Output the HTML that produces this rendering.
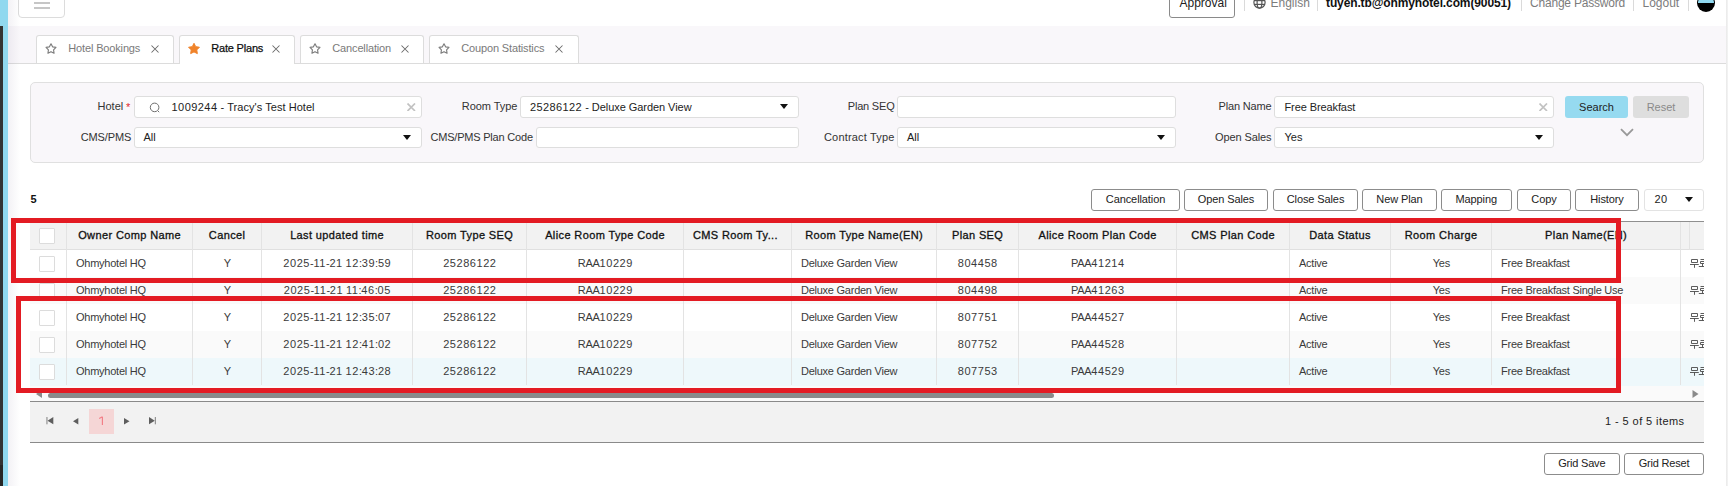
<!DOCTYPE html><html><head><meta charset="utf-8"><style>
*{box-sizing:border-box;margin:0;padding:0}
html,body{width:1728px;height:486px;overflow:hidden;background:#fff}
body{position:relative;font-family:"Liberation Sans",sans-serif;font-size:11px;color:#222}
.a{position:absolute}
.t{position:absolute;white-space:nowrap}
.sep{position:absolute;width:1px;background:#dadada}
.inp{position:absolute;background:#fff;border:1px solid #dedede;border-radius:3px}
.tri{position:absolute;width:0;height:0;border-left:4.5px solid transparent;border-right:4.5px solid transparent;border-top:5.5px solid #111}
.btn{position:absolute;border:1px solid #8c8c8c;border-radius:3px;background:#fff}
.tab{position:absolute;top:35px;height:28px;background:#fff;border:1px solid #dcdcdc;border-bottom:none;border-radius:3px 3px 0 0}
.vl{position:absolute;width:1px;background:#e3e3e3}
.cb{position:absolute;width:16px;height:16px;border:1px solid #dcdcdc;background:#fff;border-radius:1px}
.red{position:absolute;border:5px solid #e31b23}
</style></head><body>
<div class="a" style="left:0;top:0;width:8px;height:486px;background:#90d8ef"></div>
<div class="a" style="left:0;top:26px;width:3px;height:439px;background:#333"></div>
<div class="a" style="left:0;top:465px;width:3px;height:21px;background:#262626"></div>
<div class="a" style="left:1726px;top:0;width:2px;height:486px;background:linear-gradient(to right,#e9e9e9,#f4f4f4)"></div>
<div class="a" style="left:18px;top:-12px;width:47px;height:30px;border:1px solid #dcdcdc;border-radius:4px;background:#fff"></div>
<div class="a" style="left:34px;top:2px;width:16px;height:2px;background:#c6c6c6"></div>
<div class="a" style="left:34px;top:7px;width:16px;height:2px;background:#c6c6c6"></div>
<div class="btn" style="left:1169px;top:-9px;width:66px;height:27px;border-color:#8a8a8a"></div>
<div class="t" style="left:1179.5px;top:-3px;font-size:12px;line-height:12px;color:#222;">Approval</div>
<div class="sep" style="left:1244px;top:0;height:11px"></div>
<svg class="a" style="left:1253px;top:-4px" width="13" height="13" viewBox="0 0 13 13"><g fill="none" stroke="#555" stroke-width="1.2"><circle cx="6.5" cy="6.5" r="5.6"/><ellipse cx="6.5" cy="6.5" rx="2.4" ry="5.6"/><line x1="1" y1="4.6" x2="12" y2="4.6"/><line x1="1" y1="8.4" x2="12" y2="8.4"/></g></svg>
<div class="t" style="left:1270.5px;top:-3px;font-size:12px;line-height:12px;color:#7c7c7c;">English</div>
<div class="sep" style="left:1317px;top:0;height:11px"></div>
<div class="t" style="left:1326px;top:-3px;font-size:12px;line-height:12px;font-weight:bold;color:#111;letter-spacing:-0.12px;">tuyen.tb@ohmyhotel.com(90051)</div>
<div class="sep" style="left:1521px;top:0;height:11px"></div>
<div class="t" style="left:1530px;top:-3px;font-size:12px;line-height:12px;color:#7c7c7c;letter-spacing:-0.2px;">Change Password</div>
<div class="sep" style="left:1633px;top:0;height:11px"></div>
<div class="t" style="left:1642.5px;top:-3px;font-size:12px;line-height:12px;color:#7c7c7c;">Logout</div>
<div class="sep" style="left:1688px;top:0;height:11px"></div>
<div class="a" style="left:1697px;top:-6.4px;width:18px;height:18px;border-radius:50%;background:#000"></div>
<div class="a" style="left:1698px;top:-5.4px;width:16px;height:16px;border-radius:50%;background:linear-gradient(to bottom,#90d8ef 0,#90d8ef 8.3px,#000 8.3px)"></div>
<div class="a" style="left:8px;top:26px;width:1718px;height:38px;background:#f9f7fa;border-bottom:1px solid #dcdcdc"></div>
<div class="tab" style="left:36px;width:138px;height:28px"></div>
<svg class="a" style="left:42.5px;top:41.1px" width="16" height="16" viewBox="0 0 16 16"><path d="M8.00 2.80L9.59 5.82L12.95 6.39L10.57 8.83L11.06 12.21L8.00 10.70L4.94 12.21L5.43 8.83L3.05 6.39L6.41 5.82Z" fill="none" stroke="#7d7d7d" stroke-width="1.15" stroke-linejoin="round"/></svg>
<div class="t" style="left:68.3px;top:43px;font-size:11px;line-height:11px;color:#7a7a7a;letter-spacing:-0.15px;">Hotel Bookings</div>
<div class="tab" style="left:179px;width:116px;height:29px"></div>
<svg class="a" style="left:185.5px;top:41.3px" width="16" height="16" viewBox="0 0 16 16"><path d="M8.00 2.30L9.70 5.65L13.42 6.24L10.76 8.90L11.35 12.61L8.00 10.90L4.65 12.61L5.24 8.90L2.58 6.24L6.30 5.65Z" fill="#f0832a" stroke="#f0832a" stroke-width="1" stroke-linejoin="round"/></svg>
<div class="t" style="left:211.3px;top:43px;font-size:11px;line-height:11px;color:#111;-webkit-text-stroke:0.25px #111;letter-spacing:-0.2px;">Rate Plans</div>
<div class="tab" style="left:300px;width:124px;height:28px"></div>
<svg class="a" style="left:306.5px;top:41.1px" width="16" height="16" viewBox="0 0 16 16"><path d="M8.00 2.80L9.59 5.82L12.95 6.39L10.57 8.83L11.06 12.21L8.00 10.70L4.94 12.21L5.43 8.83L3.05 6.39L6.41 5.82Z" fill="none" stroke="#7d7d7d" stroke-width="1.15" stroke-linejoin="round"/></svg>
<div class="t" style="left:332.3px;top:43px;font-size:11px;line-height:11px;color:#7a7a7a;letter-spacing:-0.15px;">Cancellation</div>
<div class="tab" style="left:429px;width:150px;height:28px"></div>
<svg class="a" style="left:435.5px;top:41.1px" width="16" height="16" viewBox="0 0 16 16"><path d="M8.00 2.80L9.59 5.82L12.95 6.39L10.57 8.83L11.06 12.21L8.00 10.70L4.94 12.21L5.43 8.83L3.05 6.39L6.41 5.82Z" fill="none" stroke="#7d7d7d" stroke-width="1.15" stroke-linejoin="round"/></svg>
<div class="t" style="left:461.3px;top:43px;font-size:11px;line-height:11px;color:#7a7a7a;letter-spacing:-0.15px;">Coupon Statistics</div>
<svg class="a" style="left:150.6px;top:45.2px" width="8" height="8" viewBox="0 0 8 8"><path d="M0.5 0.5L7.5 7.5M7.5 0.5L0.5 7.5" stroke="#6a6a6a" stroke-width="1.05"/></svg>
<svg class="a" style="left:271.5px;top:45.2px" width="8" height="8" viewBox="0 0 8 8"><path d="M0.5 0.5L7.5 7.5M7.5 0.5L0.5 7.5" stroke="#6a6a6a" stroke-width="1.05"/></svg>
<svg class="a" style="left:400.6px;top:45.2px" width="8" height="8" viewBox="0 0 8 8"><path d="M0.5 0.5L7.5 7.5M7.5 0.5L0.5 7.5" stroke="#6a6a6a" stroke-width="1.05"/></svg>
<svg class="a" style="left:555px;top:45.2px" width="8" height="8" viewBox="0 0 8 8"><path d="M0.5 0.5L7.5 7.5M7.5 0.5L0.5 7.5" stroke="#6a6a6a" stroke-width="1.05"/></svg>
<div class="a" style="left:30px;top:82px;width:1674px;height:81px;background:#f9f7fa;border:1px solid #e0e0e0;border-radius:5px"></div>
<div class="t" style="right:1604.8px;top:101px;font-size:11px;line-height:11px;color:#333;">Hotel</div>
<div class="t" style="left:126px;top:102px;font-size:11px;line-height:11px;color:#e0282e;">*</div>
<div class="inp" style="left:134px;top:96px;width:288px;height:22px"></div>
<svg class="a" style="left:148.5px;top:101.5px" width="12" height="12" viewBox="0 0 12 12"><circle cx="5.6" cy="5.4" r="4.3" fill="none" stroke="#6e6e6e" stroke-width="1"/><line x1="9" y1="9" x2="10.2" y2="10.2" stroke="#6e6e6e" stroke-width="1"/></svg>
<div class="t" style="left:171.5px;top:102px;font-size:11px;line-height:11px;color:#222;letter-spacing:0.05px;"><span style="letter-spacing:0.45px">1009244</span> - Tracy's Test Hotel</div>
<svg class="a" style="left:407.3px;top:102.8px" width="8.5" height="8.5" viewBox="0 0 8.5 8.5"><path d="M0.5 0.5L8.0 8.0M8.0 0.5L0.5 8.0" stroke="#c2c2c2" stroke-width="1.7"/></svg>
<div class="t" style="right:1210.6px;top:101px;font-size:11px;line-height:11px;color:#333;letter-spacing:-0.05px;">Room Type</div>
<div class="inp" style="left:520px;top:96px;width:279px;height:22px"></div>
<div class="t" style="left:530px;top:102px;font-size:11px;line-height:11px;color:#222;letter-spacing:-0.05px;"><span style="letter-spacing:0.4px">25286122</span> - Deluxe Garden View</div>
<div class="tri" style="left:780px;top:104px;border-top-color:#111"></div>
<div class="t" style="right:833.5px;top:101px;font-size:11px;line-height:11px;color:#333;letter-spacing:-0.2px;">Plan SEQ</div>
<div class="inp" style="left:897px;top:96px;width:279px;height:22px"></div>
<div class="t" style="right:456.5px;top:101px;font-size:11px;line-height:11px;color:#333;letter-spacing:-0.17px;">Plan Name</div>
<div class="inp" style="left:1274px;top:96px;width:280px;height:22px"></div>
<div class="t" style="left:1284.5px;top:102px;font-size:11px;line-height:11px;color:#222;letter-spacing:-0.1px;">Free Breakfast</div>
<svg class="a" style="left:1539.3px;top:102.8px" width="8.5" height="8.5" viewBox="0 0 8.5 8.5"><path d="M0.5 0.5L8.0 8.0M8.0 0.5L0.5 8.0" stroke="#c2c2c2" stroke-width="1.7"/></svg>
<div class="a" style="left:1565px;top:96px;width:63px;height:22px;background:#96daf0;border-radius:3px"></div>
<div class="t" style="left:1396.5px;width:400px;text-align:center;top:102px;font-size:11px;line-height:11px;color:#222;">Search</div>
<div class="a" style="left:1633px;top:96px;width:56px;height:22px;background:#dedede;border-radius:3px"></div>
<div class="t" style="left:1461px;width:400px;text-align:center;top:102px;font-size:11px;line-height:11px;color:#8a8a8a;">Reset</div>
<div class="t" style="right:1596.7px;top:132px;font-size:11px;line-height:11px;color:#333;letter-spacing:-0.1px;">CMS/PMS</div>
<div class="inp" style="left:134px;top:127px;width:288px;height:21px"></div>
<div class="t" style="left:143.5px;top:132px;font-size:11px;line-height:11px;color:#222;">All</div>
<div class="tri" style="left:403px;top:135px;border-top-color:#111"></div>
<div class="t" style="right:1195.2px;top:132px;font-size:11px;line-height:11px;color:#333;letter-spacing:-0.2px;">CMS/PMS Plan Code</div>
<div class="inp" style="left:536px;top:127px;width:263px;height:21px"></div>
<div class="t" style="right:833.5px;top:132px;font-size:11px;line-height:11px;color:#333;letter-spacing:0.17px;">Contract Type</div>
<div class="inp" style="left:897px;top:127px;width:279px;height:21px"></div>
<div class="t" style="left:907px;top:132px;font-size:11px;line-height:11px;color:#222;">All</div>
<div class="tri" style="left:1157px;top:135px;border-top-color:#111"></div>
<div class="t" style="right:456.5px;top:132px;font-size:11px;line-height:11px;color:#333;letter-spacing:-0.1px;">Open Sales</div>
<div class="inp" style="left:1274px;top:127px;width:280px;height:21px"></div>
<div class="t" style="left:1284.5px;top:132px;font-size:11px;line-height:11px;color:#222;">Yes</div>
<div class="tri" style="left:1535px;top:135px;border-top-color:#111"></div>
<svg class="a" style="left:1620px;top:127.5px" width="14" height="9" viewBox="0 0 14 9"><path d="M1 1.2L7 7.2L13 1.2" fill="none" stroke="#999" stroke-width="1.8"/></svg>
<div class="t" style="left:30.5px;top:194px;font-size:11px;line-height:11px;font-weight:bold;color:#111;">5</div>
<div class="btn" style="left:1091px;top:189px;width:89px;height:22px"></div>
<div class="t" style="left:935.5px;width:400px;text-align:center;top:194px;font-size:11px;line-height:11px;color:#222;letter-spacing:-0.1px;">Cancellation</div>
<div class="btn" style="left:1184px;top:189px;width:84px;height:22px"></div>
<div class="t" style="left:1026.0px;width:400px;text-align:center;top:194px;font-size:11px;line-height:11px;color:#222;letter-spacing:-0.1px;">Open Sales</div>
<div class="btn" style="left:1273px;top:189px;width:85px;height:22px"></div>
<div class="t" style="left:1115.5px;width:400px;text-align:center;top:194px;font-size:11px;line-height:11px;color:#222;letter-spacing:-0.1px;">Close Sales</div>
<div class="btn" style="left:1362px;top:189px;width:75px;height:22px"></div>
<div class="t" style="left:1199.5px;width:400px;text-align:center;top:194px;font-size:11px;line-height:11px;color:#222;letter-spacing:-0.1px;">New Plan</div>
<div class="btn" style="left:1441px;top:189px;width:70.5px;height:22px"></div>
<div class="t" style="left:1276.25px;width:400px;text-align:center;top:194px;font-size:11px;line-height:11px;color:#222;letter-spacing:-0.1px;">Mapping</div>
<div class="btn" style="left:1517px;top:189px;width:54px;height:22px"></div>
<div class="t" style="left:1344.0px;width:400px;text-align:center;top:194px;font-size:11px;line-height:11px;color:#222;letter-spacing:-0.1px;">Copy</div>
<div class="btn" style="left:1575px;top:189px;width:64px;height:22px"></div>
<div class="t" style="left:1407.0px;width:400px;text-align:center;top:194px;font-size:11px;line-height:11px;color:#222;letter-spacing:-0.1px;">History</div>
<div class="inp" style="left:1644px;top:189px;width:60px;height:22px;border-color:#e3e3e3"></div>
<div class="t" style="left:1654.5px;top:194px;font-size:11px;line-height:11px;color:#222;"><span style="letter-spacing:0.5px">20</span></div>
<div class="tri" style="left:1685px;top:196.5px;border-top-color:#111"></div>
<div class="a" style="left:30px;top:221px;width:1673.5px;height:1px;background:#8f8f8f"></div>
<div class="a" style="left:30px;top:222px;width:1673.5px;height:28px;background:#f2f2f2;border-bottom:1px solid #e0e0e0"></div>
<div class="a" style="left:30px;top:250px;width:1673.5px;height:27px;background:#ffffff"></div>
<div class="a" style="left:30px;top:277px;width:1673.5px;height:27px;background:#fafafa"></div>
<div class="a" style="left:30px;top:304px;width:1673.5px;height:27px;background:#ffffff"></div>
<div class="a" style="left:30px;top:331px;width:1673.5px;height:27px;background:#fafafa"></div>
<div class="a" style="left:30px;top:358px;width:1673.5px;height:28px;background:#eef8fb"></div>
<div class="vl" style="left:66px;top:222px;height:163px"></div>
<div class="vl" style="left:192px;top:222px;height:163px"></div>
<div class="vl" style="left:261px;top:222px;height:163px"></div>
<div class="vl" style="left:412px;top:222px;height:163px"></div>
<div class="vl" style="left:526px;top:222px;height:163px"></div>
<div class="vl" style="left:683px;top:222px;height:163px"></div>
<div class="vl" style="left:791px;top:222px;height:163px"></div>
<div class="vl" style="left:936px;top:222px;height:163px"></div>
<div class="vl" style="left:1018px;top:222px;height:163px"></div>
<div class="vl" style="left:1176px;top:222px;height:163px"></div>
<div class="vl" style="left:1289px;top:222px;height:163px"></div>
<div class="vl" style="left:1390px;top:222px;height:163px"></div>
<div class="vl" style="left:1491px;top:222px;height:163px"></div>
<div class="vl" style="left:1680px;top:222px;height:163px"></div>
<div class="vl" style="left:1689px;top:222px;height:28px"></div>
<div class="t" style="left:-70.4px;width:400px;text-align:center;top:230px;font-size:11px;line-height:11px;color:#111;-webkit-text-stroke:0.3px #111;letter-spacing:0.38px;">Owner Comp Name</div>
<div class="t" style="left:27.099999999999994px;width:400px;text-align:center;top:230px;font-size:11px;line-height:11px;color:#111;-webkit-text-stroke:0.3px #111;letter-spacing:0.38px;">Cancel</div>
<div class="t" style="left:137.10000000000002px;width:400px;text-align:center;top:230px;font-size:11px;line-height:11px;color:#111;-webkit-text-stroke:0.3px #111;letter-spacing:0.38px;">Last updated time</div>
<div class="t" style="left:269.6px;width:400px;text-align:center;top:230px;font-size:11px;line-height:11px;color:#111;-webkit-text-stroke:0.3px #111;letter-spacing:0.38px;">Room Type SEQ</div>
<div class="t" style="left:405.1px;width:400px;text-align:center;top:230px;font-size:11px;line-height:11px;color:#111;-webkit-text-stroke:0.3px #111;letter-spacing:0.38px;">Alice Room Type Code</div>
<div class="t" style="left:693px;top:230px;font-size:11px;line-height:11px;color:#111;-webkit-text-stroke:0.3px #111;letter-spacing:0.38px;">CMS Room Ty...</div>
<div class="t" style="left:664.1px;width:400px;text-align:center;top:230px;font-size:11px;line-height:11px;color:#111;-webkit-text-stroke:0.3px #111;letter-spacing:0.38px;">Room Type Name(EN)</div>
<div class="t" style="left:777.6px;width:400px;text-align:center;top:230px;font-size:11px;line-height:11px;color:#111;-webkit-text-stroke:0.3px #111;letter-spacing:0.38px;">Plan SEQ</div>
<div class="t" style="left:897.5999999999999px;width:400px;text-align:center;top:230px;font-size:11px;line-height:11px;color:#111;-webkit-text-stroke:0.3px #111;letter-spacing:0.38px;">Alice Room Plan Code</div>
<div class="t" style="left:1033.1px;width:400px;text-align:center;top:230px;font-size:11px;line-height:11px;color:#111;-webkit-text-stroke:0.3px #111;letter-spacing:0.38px;">CMS Plan Code</div>
<div class="t" style="left:1140.1px;width:400px;text-align:center;top:230px;font-size:11px;line-height:11px;color:#111;-webkit-text-stroke:0.3px #111;letter-spacing:0.38px;">Data Status</div>
<div class="t" style="left:1241.1px;width:400px;text-align:center;top:230px;font-size:11px;line-height:11px;color:#111;-webkit-text-stroke:0.3px #111;letter-spacing:0.38px;">Room Charge</div>
<div class="t" style="left:1386.1px;width:400px;text-align:center;top:230px;font-size:11px;line-height:11px;color:#111;-webkit-text-stroke:0.3px #111;letter-spacing:0.38px;">Plan Name(EN)</div>
<div class="cb" style="left:39px;top:228px"></div>
<div class="cb" style="left:39px;top:256px"></div>
<div class="t" style="left:76px;top:258px;font-size:11px;line-height:11px;color:#3a3a3a;letter-spacing:-0.25px;">Ohmyhotel HQ</div>
<div class="t" style="left:27.30000000000001px;width:400px;text-align:center;top:258px;font-size:11px;line-height:11px;color:#3a3a3a;letter-spacing:-0.25px;">Y</div>
<div class="t" style="left:137.3px;width:400px;text-align:center;top:258px;font-size:11px;line-height:11px;color:#3a3a3a;letter-spacing:-0.25px;"><span style="letter-spacing:0.55px">2025</span>-<span style="letter-spacing:0.55px">11</span>-<span style="letter-spacing:0.55px">21</span> <span style="letter-spacing:0.55px">12</span>:<span style="letter-spacing:0.55px">39</span>:<span style="letter-spacing:0.55px">59</span></div>
<div class="t" style="left:269.8px;width:400px;text-align:center;top:258px;font-size:11px;line-height:11px;color:#3a3a3a;letter-spacing:-0.25px;"><span style="letter-spacing:0.55px">25286122</span></div>
<div class="t" style="left:405.29999999999995px;width:400px;text-align:center;top:258px;font-size:11px;line-height:11px;color:#3a3a3a;letter-spacing:-0.25px;">RAA<span style="letter-spacing:0.55px">10229</span></div>
<div class="t" style="left:801px;top:258px;font-size:11px;line-height:11px;color:#3a3a3a;letter-spacing:-0.25px;">Deluxe Garden View</div>
<div class="t" style="left:777.8px;width:400px;text-align:center;top:258px;font-size:11px;line-height:11px;color:#3a3a3a;letter-spacing:-0.25px;"><span style="letter-spacing:0.55px">804458</span></div>
<div class="t" style="left:897.8px;width:400px;text-align:center;top:258px;font-size:11px;line-height:11px;color:#3a3a3a;letter-spacing:-0.25px;">PAA<span style="letter-spacing:0.55px">41214</span></div>
<div class="t" style="left:1299px;top:258px;font-size:11px;line-height:11px;color:#3a3a3a;letter-spacing:-0.25px;">Active</div>
<div class="t" style="left:1241.3px;width:400px;text-align:center;top:258px;font-size:11px;line-height:11px;color:#3a3a3a;letter-spacing:-0.25px;">Yes</div>
<div class="t" style="left:1501px;top:258px;font-size:11px;line-height:11px;color:#3a3a3a;letter-spacing:-0.25px;">Free Breakfast</div>
<div class="a" style="left:1689px;top:258px;width:15px;height:11px;overflow:hidden"><svg width="20" height="11" viewBox="0 0 20 11"><g fill="none" stroke="#4a4a4a" stroke-width="0.9"><path d="M2.5 1.5H8.5V4.5H2.5Z"/><path d="M1 6.5H9.8M5.5 6.5V9.8"/><path d="M11.5 1.5H16M11.5 3.5H16M11.5 3.5V5.5H16M13.5 5.5V8.5M9.8 8.5H16"/></g></svg></div>
<div class="cb" style="left:39px;top:283px"></div>
<div class="t" style="left:76px;top:285px;font-size:11px;line-height:11px;color:#3a3a3a;letter-spacing:-0.25px;">Ohmyhotel HQ</div>
<div class="t" style="left:27.30000000000001px;width:400px;text-align:center;top:285px;font-size:11px;line-height:11px;color:#3a3a3a;letter-spacing:-0.25px;">Y</div>
<div class="t" style="left:137.3px;width:400px;text-align:center;top:285px;font-size:11px;line-height:11px;color:#3a3a3a;letter-spacing:-0.25px;"><span style="letter-spacing:0.55px">2025</span>-<span style="letter-spacing:0.55px">11</span>-<span style="letter-spacing:0.55px">21</span> <span style="letter-spacing:0.55px">11</span>:<span style="letter-spacing:0.55px">46</span>:<span style="letter-spacing:0.55px">05</span></div>
<div class="t" style="left:269.8px;width:400px;text-align:center;top:285px;font-size:11px;line-height:11px;color:#3a3a3a;letter-spacing:-0.25px;"><span style="letter-spacing:0.55px">25286122</span></div>
<div class="t" style="left:405.29999999999995px;width:400px;text-align:center;top:285px;font-size:11px;line-height:11px;color:#3a3a3a;letter-spacing:-0.25px;">RAA<span style="letter-spacing:0.55px">10229</span></div>
<div class="t" style="left:801px;top:285px;font-size:11px;line-height:11px;color:#3a3a3a;letter-spacing:-0.25px;">Deluxe Garden View</div>
<div class="t" style="left:777.8px;width:400px;text-align:center;top:285px;font-size:11px;line-height:11px;color:#3a3a3a;letter-spacing:-0.25px;"><span style="letter-spacing:0.55px">804498</span></div>
<div class="t" style="left:897.8px;width:400px;text-align:center;top:285px;font-size:11px;line-height:11px;color:#3a3a3a;letter-spacing:-0.25px;">PAA<span style="letter-spacing:0.55px">41263</span></div>
<div class="t" style="left:1299px;top:285px;font-size:11px;line-height:11px;color:#3a3a3a;letter-spacing:-0.25px;">Active</div>
<div class="t" style="left:1241.3px;width:400px;text-align:center;top:285px;font-size:11px;line-height:11px;color:#3a3a3a;letter-spacing:-0.25px;">Yes</div>
<div class="t" style="left:1501px;top:285px;font-size:11px;line-height:11px;color:#3a3a3a;letter-spacing:-0.25px;">Free Breakfast Single Use</div>
<div class="a" style="left:1689px;top:285px;width:15px;height:11px;overflow:hidden"><svg width="20" height="11" viewBox="0 0 20 11"><g fill="none" stroke="#4a4a4a" stroke-width="0.9"><path d="M2.5 1.5H8.5V4.5H2.5Z"/><path d="M1 6.5H9.8M5.5 6.5V9.8"/><path d="M11.5 1.5H16M11.5 3.5H16M11.5 3.5V5.5H16M13.5 5.5V8.5M9.8 8.5H16"/></g></svg></div>
<div class="cb" style="left:39px;top:310px"></div>
<div class="t" style="left:76px;top:312px;font-size:11px;line-height:11px;color:#3a3a3a;letter-spacing:-0.25px;">Ohmyhotel HQ</div>
<div class="t" style="left:27.30000000000001px;width:400px;text-align:center;top:312px;font-size:11px;line-height:11px;color:#3a3a3a;letter-spacing:-0.25px;">Y</div>
<div class="t" style="left:137.3px;width:400px;text-align:center;top:312px;font-size:11px;line-height:11px;color:#3a3a3a;letter-spacing:-0.25px;"><span style="letter-spacing:0.55px">2025</span>-<span style="letter-spacing:0.55px">11</span>-<span style="letter-spacing:0.55px">21</span> <span style="letter-spacing:0.55px">12</span>:<span style="letter-spacing:0.55px">35</span>:<span style="letter-spacing:0.55px">07</span></div>
<div class="t" style="left:269.8px;width:400px;text-align:center;top:312px;font-size:11px;line-height:11px;color:#3a3a3a;letter-spacing:-0.25px;"><span style="letter-spacing:0.55px">25286122</span></div>
<div class="t" style="left:405.29999999999995px;width:400px;text-align:center;top:312px;font-size:11px;line-height:11px;color:#3a3a3a;letter-spacing:-0.25px;">RAA<span style="letter-spacing:0.55px">10229</span></div>
<div class="t" style="left:801px;top:312px;font-size:11px;line-height:11px;color:#3a3a3a;letter-spacing:-0.25px;">Deluxe Garden View</div>
<div class="t" style="left:777.8px;width:400px;text-align:center;top:312px;font-size:11px;line-height:11px;color:#3a3a3a;letter-spacing:-0.25px;"><span style="letter-spacing:0.55px">807751</span></div>
<div class="t" style="left:897.8px;width:400px;text-align:center;top:312px;font-size:11px;line-height:11px;color:#3a3a3a;letter-spacing:-0.25px;">PAA<span style="letter-spacing:0.55px">44527</span></div>
<div class="t" style="left:1299px;top:312px;font-size:11px;line-height:11px;color:#3a3a3a;letter-spacing:-0.25px;">Active</div>
<div class="t" style="left:1241.3px;width:400px;text-align:center;top:312px;font-size:11px;line-height:11px;color:#3a3a3a;letter-spacing:-0.25px;">Yes</div>
<div class="t" style="left:1501px;top:312px;font-size:11px;line-height:11px;color:#3a3a3a;letter-spacing:-0.25px;">Free Breakfast</div>
<div class="a" style="left:1689px;top:312px;width:15px;height:11px;overflow:hidden"><svg width="20" height="11" viewBox="0 0 20 11"><g fill="none" stroke="#4a4a4a" stroke-width="0.9"><path d="M2.5 1.5H8.5V4.5H2.5Z"/><path d="M1 6.5H9.8M5.5 6.5V9.8"/><path d="M11.5 1.5H16M11.5 3.5H16M11.5 3.5V5.5H16M13.5 5.5V8.5M9.8 8.5H16"/></g></svg></div>
<div class="cb" style="left:39px;top:337px"></div>
<div class="t" style="left:76px;top:339px;font-size:11px;line-height:11px;color:#3a3a3a;letter-spacing:-0.25px;">Ohmyhotel HQ</div>
<div class="t" style="left:27.30000000000001px;width:400px;text-align:center;top:339px;font-size:11px;line-height:11px;color:#3a3a3a;letter-spacing:-0.25px;">Y</div>
<div class="t" style="left:137.3px;width:400px;text-align:center;top:339px;font-size:11px;line-height:11px;color:#3a3a3a;letter-spacing:-0.25px;"><span style="letter-spacing:0.55px">2025</span>-<span style="letter-spacing:0.55px">11</span>-<span style="letter-spacing:0.55px">21</span> <span style="letter-spacing:0.55px">12</span>:<span style="letter-spacing:0.55px">41</span>:<span style="letter-spacing:0.55px">02</span></div>
<div class="t" style="left:269.8px;width:400px;text-align:center;top:339px;font-size:11px;line-height:11px;color:#3a3a3a;letter-spacing:-0.25px;"><span style="letter-spacing:0.55px">25286122</span></div>
<div class="t" style="left:405.29999999999995px;width:400px;text-align:center;top:339px;font-size:11px;line-height:11px;color:#3a3a3a;letter-spacing:-0.25px;">RAA<span style="letter-spacing:0.55px">10229</span></div>
<div class="t" style="left:801px;top:339px;font-size:11px;line-height:11px;color:#3a3a3a;letter-spacing:-0.25px;">Deluxe Garden View</div>
<div class="t" style="left:777.8px;width:400px;text-align:center;top:339px;font-size:11px;line-height:11px;color:#3a3a3a;letter-spacing:-0.25px;"><span style="letter-spacing:0.55px">807752</span></div>
<div class="t" style="left:897.8px;width:400px;text-align:center;top:339px;font-size:11px;line-height:11px;color:#3a3a3a;letter-spacing:-0.25px;">PAA<span style="letter-spacing:0.55px">44528</span></div>
<div class="t" style="left:1299px;top:339px;font-size:11px;line-height:11px;color:#3a3a3a;letter-spacing:-0.25px;">Active</div>
<div class="t" style="left:1241.3px;width:400px;text-align:center;top:339px;font-size:11px;line-height:11px;color:#3a3a3a;letter-spacing:-0.25px;">Yes</div>
<div class="t" style="left:1501px;top:339px;font-size:11px;line-height:11px;color:#3a3a3a;letter-spacing:-0.25px;">Free Breakfast</div>
<div class="a" style="left:1689px;top:339px;width:15px;height:11px;overflow:hidden"><svg width="20" height="11" viewBox="0 0 20 11"><g fill="none" stroke="#4a4a4a" stroke-width="0.9"><path d="M2.5 1.5H8.5V4.5H2.5Z"/><path d="M1 6.5H9.8M5.5 6.5V9.8"/><path d="M11.5 1.5H16M11.5 3.5H16M11.5 3.5V5.5H16M13.5 5.5V8.5M9.8 8.5H16"/></g></svg></div>
<div class="cb" style="left:39px;top:364px"></div>
<div class="t" style="left:76px;top:366px;font-size:11px;line-height:11px;color:#3a3a3a;letter-spacing:-0.25px;">Ohmyhotel HQ</div>
<div class="t" style="left:27.30000000000001px;width:400px;text-align:center;top:366px;font-size:11px;line-height:11px;color:#3a3a3a;letter-spacing:-0.25px;">Y</div>
<div class="t" style="left:137.3px;width:400px;text-align:center;top:366px;font-size:11px;line-height:11px;color:#3a3a3a;letter-spacing:-0.25px;"><span style="letter-spacing:0.55px">2025</span>-<span style="letter-spacing:0.55px">11</span>-<span style="letter-spacing:0.55px">21</span> <span style="letter-spacing:0.55px">12</span>:<span style="letter-spacing:0.55px">43</span>:<span style="letter-spacing:0.55px">28</span></div>
<div class="t" style="left:269.8px;width:400px;text-align:center;top:366px;font-size:11px;line-height:11px;color:#3a3a3a;letter-spacing:-0.25px;"><span style="letter-spacing:0.55px">25286122</span></div>
<div class="t" style="left:405.29999999999995px;width:400px;text-align:center;top:366px;font-size:11px;line-height:11px;color:#3a3a3a;letter-spacing:-0.25px;">RAA<span style="letter-spacing:0.55px">10229</span></div>
<div class="t" style="left:801px;top:366px;font-size:11px;line-height:11px;color:#3a3a3a;letter-spacing:-0.25px;">Deluxe Garden View</div>
<div class="t" style="left:777.8px;width:400px;text-align:center;top:366px;font-size:11px;line-height:11px;color:#3a3a3a;letter-spacing:-0.25px;"><span style="letter-spacing:0.55px">807753</span></div>
<div class="t" style="left:897.8px;width:400px;text-align:center;top:366px;font-size:11px;line-height:11px;color:#3a3a3a;letter-spacing:-0.25px;">PAA<span style="letter-spacing:0.55px">44529</span></div>
<div class="t" style="left:1299px;top:366px;font-size:11px;line-height:11px;color:#3a3a3a;letter-spacing:-0.25px;">Active</div>
<div class="t" style="left:1241.3px;width:400px;text-align:center;top:366px;font-size:11px;line-height:11px;color:#3a3a3a;letter-spacing:-0.25px;">Yes</div>
<div class="t" style="left:1501px;top:366px;font-size:11px;line-height:11px;color:#3a3a3a;letter-spacing:-0.25px;">Free Breakfast</div>
<div class="a" style="left:1689px;top:366px;width:15px;height:11px;overflow:hidden"><svg width="20" height="11" viewBox="0 0 20 11"><g fill="none" stroke="#4a4a4a" stroke-width="0.9"><path d="M2.5 1.5H8.5V4.5H2.5Z"/><path d="M1 6.5H9.8M5.5 6.5V9.8"/><path d="M11.5 1.5H16M11.5 3.5H16M11.5 3.5V5.5H16M13.5 5.5V8.5M9.8 8.5H16"/></g></svg></div>
<div class="a" style="left:30px;top:386px;width:1673.5px;height:15px;background:#fafafa"></div>
<svg class="a" style="left:35.8px;top:389.5px" width="7" height="8" viewBox="0 0 7 8"><path d="M6 0L0 4L6 8z" fill="#8a8a8a"/></svg>
<div class="a" style="left:47.5px;top:393px;width:1006px;height:5px;background:#8a8a8a;border-radius:3px"></div>
<svg class="a" style="left:1692px;top:389.5px" width="7" height="8" viewBox="0 0 7 8"><path d="M0.5 0L6.5 4L0.5 8z" fill="#8a8a8a"/></svg>
<div class="a" style="left:30px;top:401px;width:1673.5px;height:42px;background:#f2f2f2;border-top:1px solid #8a8a8a;border-bottom:1px solid #8a8a8a"></div>
<svg class="a" style="left:45.5px;top:417px" width="8" height="8" viewBox="0 0 8 8"><rect x="0.4" y="0" width="1.1" height="7.3" fill="#8a8a8a"/><path d="M7.3 0L1.5 3.65L7.3 7.3z" fill="#5e5e5e"/></svg>
<svg class="a" style="left:73px;top:417.6px" width="6" height="7" viewBox="0 0 6 7"><path d="M5.3 0L0 3.2L5.3 6.4z" fill="#5e5e5e"/></svg>
<div class="a" style="left:89px;top:409px;width:25px;height:24.5px;background:#f5d6d6"></div>
<svg class="a" style="left:98px;top:416px" width="7" height="10" viewBox="0 0 7 10"><path d="M4.4 0.8V9M1.2 2.6L4.4 0.8" fill="none" stroke="#f27d86" stroke-width="1.15"/></svg>
<svg class="a" style="left:124px;top:417.6px" width="6" height="7" viewBox="0 0 6 7"><path d="M0 0L5.5 3.2L0 6.4z" fill="#5e5e5e"/></svg>
<svg class="a" style="left:148.7px;top:417px" width="8" height="8" viewBox="0 0 8 8"><path d="M0 0L5.8 3.65L0 7.3z" fill="#5e5e5e"/><rect x="5.8" y="0" width="1.1" height="7.3" fill="#8a8a8a"/></svg>
<div class="t" style="right:43.5px;top:416px;font-size:11px;line-height:11px;color:#222;letter-spacing:0.42px;">1 - 5 of 5 items</div>
<div class="btn" style="left:1544px;top:453px;width:75.5px;height:22px"></div>
<div class="t" style="left:1381.75px;width:400px;text-align:center;top:458px;font-size:11px;line-height:11px;color:#222;letter-spacing:-0.2px;">Grid Save</div>
<div class="btn" style="left:1624px;top:453px;width:80px;height:22px"></div>
<div class="t" style="left:1464px;width:400px;text-align:center;top:458px;font-size:11px;line-height:11px;color:#222;letter-spacing:-0.2px;">Grid Reset</div>
<div class="a" style="left:8px;top:0;width:12px;height:486px;background:linear-gradient(to right,rgba(50,30,90,0.06),rgba(50,30,90,0))"></div>
<div class="red" style="left:11px;top:218px;width:1609.5px;height:65px"></div>
<div class="red" style="left:16px;top:296px;width:1604.5px;height:96.5px"></div>
</body></html>
